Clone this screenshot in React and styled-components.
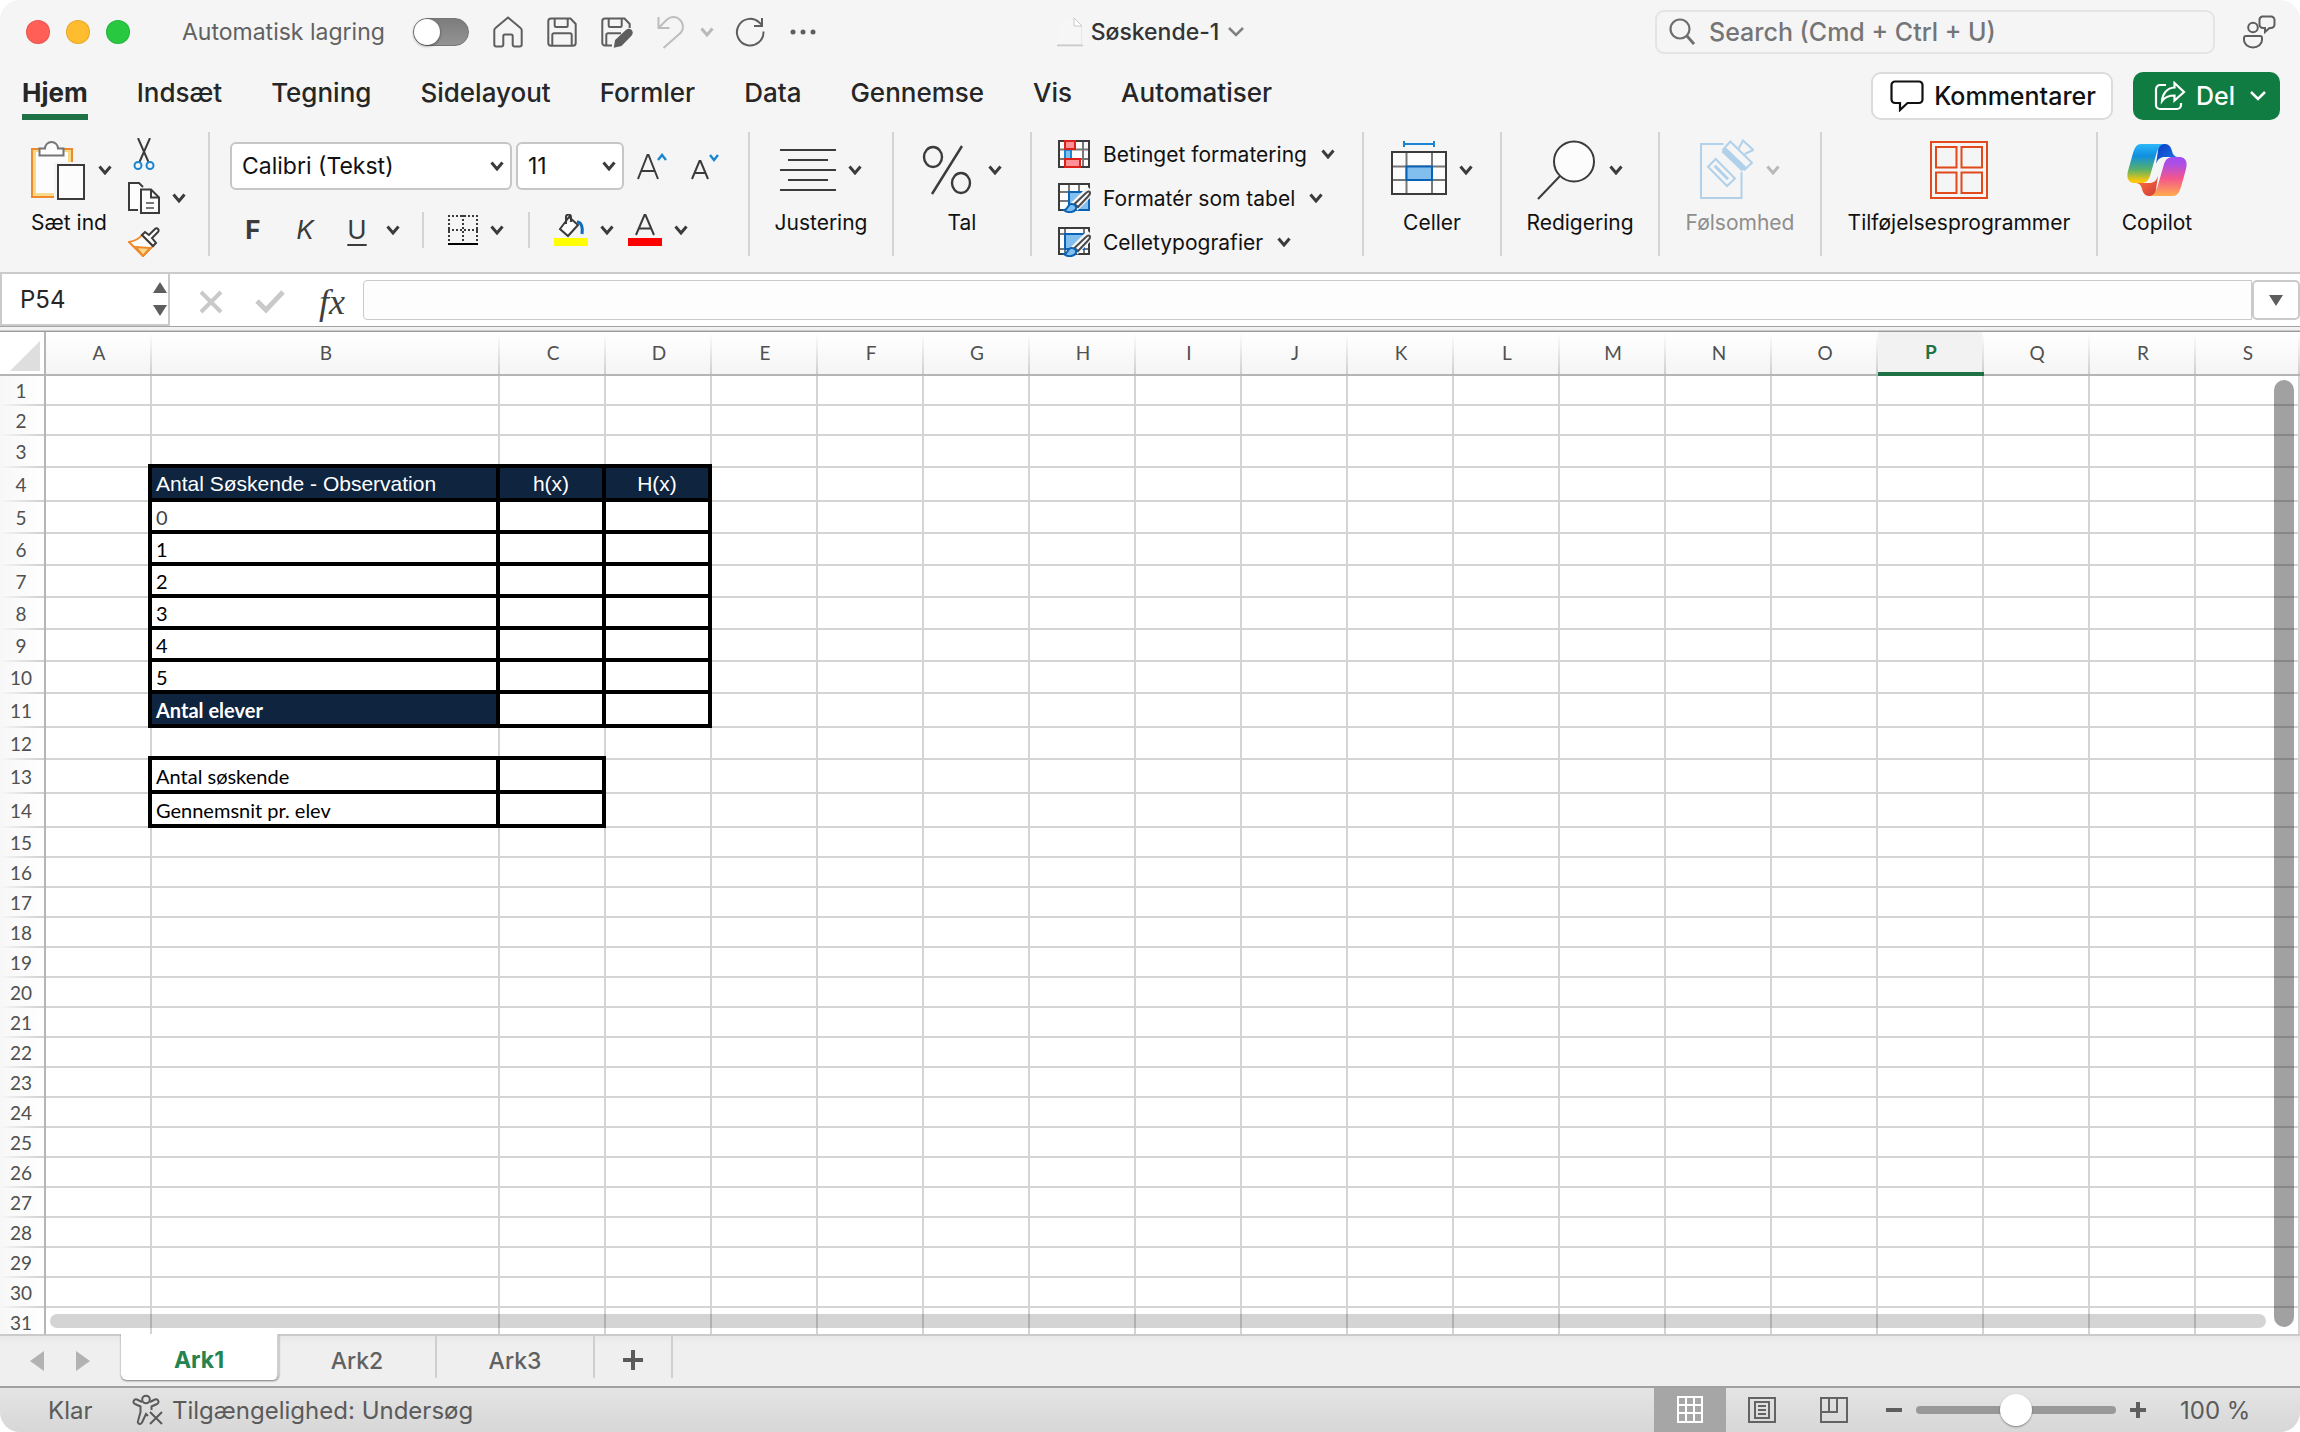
import React, { useState } from "react"
import styled, { createGlobalStyle } from "styled-components"

const TABS = ["Hjem", "Indsæt", "Tegning", "Sidelayout", "Formler", "Data", "Gennemse", "Vis", "Automatiser"]
const COLUMNS = "ABCDEFGHIJKLMNOPQRS".split("")
const ROWS = Array.from({ length: 31 }, (_, i) => i + 1)
const SHEETS = ["Ark1", "Ark2", "Ark3"]

const rowHeight = (row) => {
    if ([4, 11, 13, 14].includes(row)) return 34
    if (row === 3 || (row > 4 && row < 13)) return 32
    return 30
}

const columnWidth = (column) => {
    if (column === "B") return 348
    // the last column takes what is left of the window
    if (column === "S") return undefined
    return 106
}

const CELLS = {
    B4: { text: "Antal Søskende - Observation", kind: "heading" },
    C4: { text: "h(x)", kind: "heading", align: "center" },
    D4: { text: "H(x)", kind: "heading", align: "center" },
    B5: { text: "0", muted: true },
    B6: { text: "1" },
    B7: { text: "2" },
    B8: { text: "3" },
    B9: { text: "4" },
    B10: { text: "5" },
    B11: { text: "Antal elever", kind: "total" },
    B13: { text: "Antal søskende" },
    B14: { text: "Gennemsnit pr. elev" },
}

const isBoxed = (column, row) => {
    if (row >= 4 && row <= 11) return "BCD".includes(column)
    if (row === 13 || row === 14) return "BC".includes(column)
    return false
}

/* ---------- icons ---------- */

const Chevron = ({ color = "#3b3b3b" }) => (
    <Icon width="14" height="10" viewBox="0 0 14 10">
        <path d="M1.5 1.5L7 8l5.500-6.500" stroke={color} strokeWidth="3" />
    </Icon>
)

const WideChevron = ({ color }) => (
    <Icon width="18" height="12" viewBox="0 0 18 12">
        <path d="M2 2l7 7 7-7" stroke={color} strokeWidth="2.5" />
    </Icon>
)

const HomeIcon = () => (
    <Icon width="30" height="32" viewBox="0 0 30 32" stroke="#5e5e5e" strokeWidth="2">
        <path d="M15 1.5L27.5 12a3 3 0 0 1 1.2 2v14.5a2 2 0 0 1-2 2h-5a2 2 0 0 1-2-2V20a1.500 1.500 0 0 0-1.500-1.500h-6.400A1.500 1.500 0 0 0 10.300 20v8.500a2 2 0 0 1-2 2h-5a2 2 0 0 1-2-2V14a3 3 0 0 1 1.200-2z" />
    </Icon>
)

const SaveIcon = () => (
    <Icon width="30" height="30" viewBox="0 0 30 30" stroke="#5e5e5e" strokeWidth="2">
        <path d="M4 1.5h19.5L28.700 7v19a2.700 2.700 0 0 1-2.700 2.700H4A2.700 2.700 0 0 1 1.300 26V4.200A2.700 2.700 0 0 1 4 1.500z" />
        <path d="M7.700 1.500V8.500a1.500 1.500 0 0 0 1.500 1.500h10a1.500 1.500 0 0 0 1.500-1.500V1.500M5.300 28.500V18a1.700 1.700 0 0 1 1.700-1.700h16a1.700 1.700 0 0 1 1.700 1.700v10.500" />
    </Icon>
)

const SaveAsIcon = () => (
    <Icon width="32" height="32" viewBox="0 0 32 32" stroke="#5e5e5e" strokeWidth="2">
        <path d="M11 29.500H4A2.700 2.700 0 0 1 1.300 27V5.200A2.700 2.700 0 0 1 4 2.500h19.500L28.700 8v4" />
        <path d="M7.700 2.500V9.500A1.500 1.500 0 0 0 9.200 11h10a1.500 1.500 0 0 0 1.500-1.500V2.500M5.300 29.500V19A1.700 1.700 0 0 1 7 17.300h13" />
        <path d="M14 30.500l1-6L25.500 14.700a2.800 2.800 0 0 1 4.500 4L20 29z" fill="#5e5e5e" />
    </Icon>
)

const UndoIcon = () => (
    <Icon width="28" height="34" viewBox="0 0 28 34" stroke="#bdbdbd" strokeWidth="2">
        <path d="M1.500 2v11h11M1.500 13L10 4.500a9.600 9.600 0 0 1 14 13L6.500 33" />
    </Icon>
)

const RedoIcon = () => (
    <Icon width="30" height="30" viewBox="0 0 30 30" stroke="#5e5e5e" strokeWidth="2">
        <path d="M28.500 14.500A13.300 13.300 0 1 1 24 5.200L27 8M27 1v8h-8" />
    </Icon>
)

const DotsIcon = () => (
    <Icon width="28" height="8" viewBox="0 0 28 8" fill="#5e5e5e">
        <circle cx="4" cy="4" r="2.5" />
        <circle cx="14" cy="4" r="2.5" />
        <circle cx="24" cy="4" r="2.5" />
    </Icon>
)

const DocIcon = () => (
    <Icon width="26" height="32" viewBox="0 0 26 32">
        <path d="M1 2h16l8 8v19.500H1z" fill="#e6e6e6" />
        <path d="M1 2h16v8h7v18H1z" fill="#f6f6f6" />
        <path d="M17 2l8 8h-8z" fill="#fff" stroke="#c8c8c8" strokeWidth="1" />
        <path d="M0 29.500h26" stroke="#c9c9c9" strokeWidth="1.5" />
    </Icon>
)

const SearchIcon = () => (
    <Icon width="26" height="28" viewBox="0 0 26 28" stroke="#6e6e6e" strokeWidth="2.2">
        <circle cx="11" cy="11" r="9.5" />
        <path d="M18 18l7 8" strokeWidth="2.8" />
    </Icon>
)

const PresenceIcon = () => (
    <Icon width="34" height="34" viewBox="0 0 34 34" stroke="#5e5e5e" strokeWidth="2">
        <circle cx="11" cy="12.5" r="4.8" />
        <path d="M4 21h14a2 2 0 0 1 2 2v2c0 4-4 7.500-9 7.500S2 29 2 25v-2a2 2 0 0 1 2-2z" />
        <path d="M20 1.500h9a3.500 3.500 0 0 1 3.500 3.500v4.500A3.500 3.500 0 0 1 29 13h-1.500L23 17v-4h-2a3.500 3.500 0 0 1-3.500-3.500V5A3.500 3.500 0 0 1 20 1.500z" />
    </Icon>
)

const CommentIcon = () => (
    <Icon width="34" height="32" viewBox="0 0 34 32" stroke="#111" strokeWidth="2.2">
        <path d="M5 1.500h24a3.500 3.500 0 0 1 3.500 3.500v14.500A3.500 3.500 0 0 1 29 23H17.500L10 30v-7H5a3.500 3.500 0 0 1-3.500-3.500V5A3.500 3.500 0 0 1 5 1.500z" />
    </Icon>
)

const ShareIcon = () => (
    <Icon width="32" height="30" viewBox="0 0 32 30" stroke="#fff" strokeWidth="2.2">
        <path d="M12 4H6a4 4 0 0 0-4 4v16a4 4 0 0 0 4 4h17a4 4 0 0 0 4-4v-2" />
        <path d="M20.500 2L30 11l-9.500 8.500V14.500C15 14.500 11 16 8 20c.5-7.500 5-13 12.500-13.500z" />
    </Icon>
)

const PasteIcon = () => (
    <Icon width="60" height="60" viewBox="-4 0 60 60">
        <path d="M2 9h40v48H2z" fill="#f7d98b" stroke="#ee8a2c" strokeWidth="2" />
        <path d="M6 12h32v41H6z" fill="#fcfcfc" />
        <path d="M24 22h22v38H24z" fill="#f5f5f5" />
        <path d="M9.500 15.500V8.500H15a6.500 6.500 0 0 1 13 0h5.500v7z" fill="#fcfcfc" stroke="#757575" strokeWidth="2" />
        <path d="M28 25h26v34H28z" fill="#fcfcfc" stroke="#3b3b3b" strokeWidth="2" />
    </Icon>
)

const CutIcon = () => (
    <Icon width="22" height="32" viewBox="0 0 22 32">
        <path d="M5 0L15.500 24M17 0L6.500 24" stroke="#3b3b3b" strokeWidth="2" />
        <circle cx="5" cy="27.5" r="3.5" stroke="#1a86d0" strokeWidth="2" />
        <circle cx="17" cy="27.5" r="3.5" stroke="#1a86d0" strokeWidth="2" />
    </Icon>
)

const CopyIcon = () => (
    <Icon width="32" height="32" viewBox="0 0 32 32" stroke="#3b3b3b" strokeWidth="2">
        <path d="M10 28H1V1h10l4 4" fill="#fcfcfc" />
        <path d="M13 7.500h10l8 8V31H13z" fill="#fcfcfc" />
        <path d="M23 7.500v8h8" />
        <path d="M18 21h8M18 26h8" stroke="#777" />
    </Icon>
)

const BrushIcon = () => (
    <Icon width="32" height="30" viewBox="0 0 32 30" strokeWidth="2">
        <path d="M14 8L25 19 15 29 1 15C7 14 11 12 14 8z" fill="#fcfcfc" stroke="#ee8a2c" />
        <path d="M8 20l14 1-7 8z" fill="#f7d98b" stroke="#ee8a2c" />
        <path d="M14 8l3-3 4 3 6-6c2-2 5 1 3 3l-6 6 4 5-3 3z" fill="#fcfcfc" stroke="#3b3b3b" />
    </Icon>
)

const GrowFontIcon = () => (
    <Icon width="32" height="28" viewBox="0 0 32 28">
        <path d="M2 27L11.500 3h1L22 27M5.500 19h13" stroke="#3b3b3b" strokeWidth="2" />
        <path d="M22 8l4-5 4 5" stroke="#1a86d0" strokeWidth="2.4" />
    </Icon>
)

const ShrinkFontIcon = () => (
    <Icon width="32" height="28" viewBox="0 0 32 28">
        <path d="M2 27L9.500 9h1L18 27M5 21h10" stroke="#3b3b3b" strokeWidth="2" />
        <path d="M20 3l4 5 4-5" stroke="#1a86d0" strokeWidth="2.4" />
    </Icon>
)

const BordersIcon = () => (
    <Icon width="30" height="30" viewBox="0 0 30 30" stroke="#3b3b3b" strokeWidth="2">
        <path d="M0 1h30M0 15h30" strokeDasharray="2 2" />
        <path d="M1 0v28M15 0v28M29 0v28" strokeDasharray="2 2" />
        <path d="M0 29h30" stroke="#000" />
    </Icon>
)

const FillIcon = () => (
    <Icon width="34" height="32" viewBox="0 0 34 32">
        <path d="M15 3L6 15l8 7 10-11-9-8zM12 10V3a2.500 2.500 0 0 1 5 0v5" fill="#fcfcfc" stroke="#3b3b3b" strokeWidth="2" />
        <path d="M23 8c4 0 6 4 5 12" stroke="#0f6cbd" strokeWidth="3" />
        <path d="M0 24h34v8H0z" fill="#ff0" />
    </Icon>
)

const FontColorIcon = () => (
    <Icon width="34" height="32" viewBox="0 0 34 32">
        <path d="M8 21L16.500 1h1L26 21M11 14.500h12" stroke="#3b3b3b" strokeWidth="2" />
        <path d="M0 24h34v8H0z" fill="#f00" />
    </Icon>
)

const AlignIcon = () => (
    <Icon width="56" height="44" viewBox="0 0 56 44" stroke="#3b3b3b" strokeWidth="2">
        <path d="M0 2h56M8 12h40M0 22h56M8 32h40M0 42h56" />
    </Icon>
)

const PercentIcon = () => (
    <Icon width="54" height="50" viewBox="0 0 54 50" stroke="#3b3b3b" strokeWidth="2.4">
        <ellipse cx="11" cy="12" rx="9" ry="10" />
        <ellipse cx="39" cy="38" rx="9" ry="10" />
        <path d="M40 1L10 49" />
    </Icon>
)

const ConditionalIcon = () => (
    <Icon width="34" height="28" viewBox="0 0 34 28" strokeWidth="2">
        <path d="M1 1h30v26H1z" fill="#fcfcfc" />
        <path d="M1 9.500h30M1 19h30M25 1v26" stroke="#777" />
        <path d="M1 1h30v26H1z" stroke="#3b3b3b" />
        <path d="M7 10h6v9H7z" fill="#83bfee" stroke="#1a86d0" />
        <path d="M7 1h10v8H7zM7 19h15v8H7z" fill="#ff9095" stroke="#dd2018" />
    </Icon>
)

const Paintbrush = () => (
    <>
        <path d="M33 7L16 24" stroke="#f5f5f5" strokeWidth="10" />
        <path d="M31 8.500c2 1 1 3-1 5L20 24l-3.500-3L28 10c1-1 2-2 3-1.500z" fill="#fcfcfc" stroke="#4b4b4b" strokeWidth="2" />
        <path d="M6 27c4 0 3-5 7-6 3-.5 6 2 5 5-2 4-9 4-12 1z" fill="#83bfee" stroke="#0a62b5" strokeWidth="2" />
    </>
)

const TableStyleIcon = () => (
    <Icon width="34" height="30" viewBox="0 0 34 30" strokeWidth="2">
        <path d="M1 1h30v26H1z" fill="#fcfcfc" />
        <path d="M1 9h30M1 18h30M11 1v26M21 1v26" stroke="#777" />
        <path d="M1 1h30v26H1z" stroke="#3b3b3b" />
        <path d="M11 9h20v18H11z" fill="#83bfee" stroke="#0a62b5" />
        <Paintbrush />
    </Icon>
)

const CellStyleIcon = () => (
    <Icon width="34" height="30" viewBox="0 0 34 30" strokeWidth="2">
        <path d="M1 1h30v26H1z" fill="#fcfcfc" />
        <path d="M1 7h30M1 22h30M7 1v26M26 1v26" stroke="#777" />
        <path d="M1 1h30v26H1z" stroke="#3b3b3b" />
        <path d="M7 7h19v15H7z" fill="#83bfee" stroke="#0a62b5" />
        <Paintbrush />
    </Icon>
)

const CellsIcon = () => (
    <Icon width="56" height="58" viewBox="0 0 56 58" strokeWidth="2">
        <path d="M13 0v6M43 0v6M13 3h30" stroke="#1a86d0" />
        <path d="M1 11h54v42H1z" fill="#fcfcfc" />
        <path d="M15.500 11v42M41 11v42M1 25.500h54M1 39h54" stroke="#777" />
        <path d="M1 11h54v42H1z" stroke="#3b3b3b" />
        <path d="M15.500 25.500H41V39H15.500z" fill="#83bfee" stroke="#0a62b5" />
    </Icon>
)

const MagnifierIcon = () => (
    <Icon width="60" height="60" viewBox="0 0 60 60" stroke="#3b3b3b" strokeWidth="2">
        <circle cx="37" cy="21.5" r="20" fill="#fcfcfc" />
        <path d="M23 36L1 59" />
    </Icon>
)

const SensitivityIcon = () => (
    <Icon width="54" height="62" viewBox="0 0 54 62" stroke="#b1d1ea" strokeWidth="2">
        <path d="M23.500 5H1v54h40.500V33" />
        <path d="M15.700 20L35 39.500 27 47 8 27.700z" />
        <path d="M14.700 26.700L28 40.300" strokeWidth="3" />
        <path d="M30.300 2.500L52 23.700l-7.300 7L23 10.700z" />
        <path d="M23 13l19 18 3-3-19-18z" fill="#b1d1ea" />
        <path d="M38.700 9.500L43 1.500l10.300 9.500-8.500 4" />
    </Icon>
)

const AddInsIcon = () => (
    <Icon width="58" height="58" viewBox="0 0 58 58" stroke="#e2491b" strokeWidth="2">
        <path d="M1 1h56v56H1zM6 6h20.500v20.500H6zM31.500 6H52v20.500H31.500zM6 31.500h20.500V52H6zM31.500 31.500H52V52H31.500z" />
    </Icon>
)

const CopilotIcon = () => (
    <Icon width="60" height="53" viewBox="0 0 60 53">
        <defs>
            <linearGradient id="cpLeft" x1="0" y1="0" x2="0" y2="1">
                <stop offset="0" stopColor="#2bb8f8" />
                <stop offset="0.3" stopColor="#0f8fe2" />
                <stop offset="0.65" stopColor="#57b06a" />
                <stop offset="0.95" stopColor="#fcc80a" />
            </linearGradient>
            <linearGradient id="cpRight" x1="0" y1="1" x2="0" y2="0">
                <stop offset="0" stopColor="#a04cf4" />
                <stop offset="0.2" stopColor="#b04fe0" />
                <stop offset="0.55" stopColor="#f4568c" />
                <stop offset="1" stopColor="#ffac4c" />
            </linearGradient>
            <linearGradient id="cpTop" x1="0" y1="0" x2="1" y2="1">
                <stop offset="0" stopColor="#0a37c4" />
                <stop offset="1" stopColor="#1c83ea" />
            </linearGradient>
            <linearGradient id="cpBottom" x1="1" y1="1" x2="0" y2="0">
                <stop offset="0" stopColor="#ff7a3c" />
                <stop offset="1" stopColor="#d23a3a" />
            </linearGradient>
        </defs>
        <path d="M32 0h6c4 0 6 3 7 7 1 4 3 6 7 6H38c-5 0-7 2-9 7z" fill="url(#cpTop)" />
        <path d="M14 0h23c-4 1-6 4-8 11l-6 21c-2 5-4 7-9 7H8c-6 0-9-4-7-12L6 9c2-6 4-9 8-9z" fill="url(#cpLeft)" />
        <g transform="rotate(180 30 26)">
            <path d="M32 0h6c4 0 6 3 7 7 1 4 3 6 7 6H38c-5 0-7 2-9 7z" fill="url(#cpBottom)" />
            <path d="M14 0h23c-4 1-6 4-8 11l-6 21c-2 5-4 7-9 7H8c-6 0-9-4-7-12L6 9c2-6 4-9 8-9z" fill="url(#cpRight)" />
        </g>
    </Icon>
)

const TriangleIcon = ({ points, width = 14, height = 11, color = "#5e5e5e" }) => (
    <Icon width={width} height={height} viewBox={`0 0 ${width} ${height}`}>
        <polygon points={points} fill={color} />
    </Icon>
)

const AccessibilityIcon = () => (
    <Icon width="32" height="32" viewBox="0 0 32 32" stroke="#5a5a5a" strokeWidth="2">
        <circle cx="14" cy="5.5" r="3.8" />
        <path d="M10 8L5 5.500C2 4.500 0 8.500 3 10l5.500 2.500V18L6 27c-1 3 3 4 4 1.500L14 20l2 2M18 8l5-2.500c3-1 5 3 2 4.500l-5.500 2.500V16" />
        <path d="M18 18l12 12M30 18L18 30" />
    </Icon>
)

const NormalViewIcon = () => (
    <Icon width="26" height="28" viewBox="0 0 26 28" stroke="#fff" strokeWidth="2">
        <path d="M1 1h24v25H1zM1 9h24M1 17h24M9 1v25M17 1v25" />
    </Icon>
)

const PageLayoutIcon = () => (
    <Icon width="28" height="28" viewBox="0 0 28 28" stroke="#636363" strokeWidth="2">
        <path d="M1 2h26v24H1zM7 6h14v16H7zM10 10h8M10 14h8M10 18h8" />
    </Icon>
)

const PageBreakIcon = () => (
    <Icon width="28" height="28" viewBox="0 0 28 28" stroke="#636363" strokeWidth="2">
        <path d="M1 2h26v24H1zM1 16h16V2M9 2v14" />
    </Icon>
)

/* ---------- parts ---------- */

const BigTool = ({ icon, label, chevron = true, disabled }) => (
    <ToolButton disabled={disabled}>
        <ToolFace>
            {icon}
            {chevron && <Chevron color={disabled ? "#b9b9b9" : undefined} />}
        </ToolFace>
        {label}
    </ToolButton>
)

function TitleBar() {
    const [autosave, setAutosave] = useState(false)

    return (
        <TitleRow>
            <TitleTools>
                <Light $color="#ff5f57" aria-label="Luk" />
                <Light $color="#febc2e" aria-label="Minimer" />
                <Light $color="#28c840" aria-label="Zoom" />
                <AutosaveLabel>
                    Automatisk lagring
                    <Toggle type="checkbox" checked={autosave} onChange={() => setAutosave(!autosave)} />
                </AutosaveLabel>
                <QuickAccess>
                    <PlainButton aria-label="Startside"><HomeIcon /></PlainButton>
                    <PlainButton aria-label="Gem"><SaveIcon /></PlainButton>
                    <PlainButton aria-label="Gem som"><SaveAsIcon /></PlainButton>
                    <UndoTools>
                        <PlainButton aria-label="Fortryd"><UndoIcon /></PlainButton>
                        <PlainButton aria-label="Fortryd liste"><Chevron color="#b9b9b9" /></PlainButton>
                    </UndoTools>
                    <PlainButton aria-label="Gentag"><RedoIcon /></PlainButton>
                    <PlainButton aria-label="Mere"><DotsIcon /></PlainButton>
                </QuickAccess>
            </TitleTools>
            <DocumentTitle>
                <DocIcon />
                Søskende-1
                <WideChevron color="#808080" />
            </DocumentTitle>
            <TitleEnd>
                <SearchBox>
                    <SearchIcon />
                    <input aria-label="Search" placeholder="Search (Cmd + Ctrl + U)" />
                </SearchBox>
                <PlainButton aria-label="Samarbejde"><PresenceIcon /></PlainButton>
            </TitleEnd>
        </TitleRow>
    )
}

function Ribbon() {
    return (
        <RibbonRow>
            <ClipboardGroup>
                <BigTool icon={<PasteIcon />} label="Sæt ind" />
                <SmallTools>
                    <PlainButton aria-label="Klip"><CutIcon /></PlainButton>
                    <span />
                    <PlainButton aria-label="Kopiér"><CopyIcon /></PlainButton>
                    <Chevron />
                    <PlainButton aria-label="Formatpensel"><BrushIcon /></PlainButton>
                </SmallTools>
            </ClipboardGroup>

            <FontGroup>
                <PickerLine>
                    <Picker $width={282}>
                        <select aria-label="Skrifttype">
                            <option>Calibri (Tekst)</option>
                        </select>
                        <Chevron />
                    </Picker>
                    <Picker $width={108}>
                        <select aria-label="Skriftstørrelse">
                            <option>11</option>
                        </select>
                        <Chevron />
                    </Picker>
                    <FontSizers>
                        <PlainButton aria-label="Forøg skriftstørrelse"><GrowFontIcon /></PlainButton>
                        <PlainButton aria-label="Formindsk skriftstørrelse"><ShrinkFontIcon /></PlainButton>
                    </FontSizers>
                </PickerLine>
                <FontLine>
                    <StyleButton $look="bold">F</StyleButton>
                    <StyleButton $look="italic">K</StyleButton>
                    <StyleButton $look="underline">U</StyleButton>
                    <Chevron />
                    <Divider />
                    <SplitTool aria-label="Kanter"><BordersIcon /><Chevron /></SplitTool>
                    <Divider />
                    <SplitTool aria-label="Fyldfarve"><FillIcon /><Chevron /></SplitTool>
                    <SplitTool aria-label="Skriftfarve"><FontColorIcon /><Chevron /></SplitTool>
                </FontLine>
            </FontGroup>

            <Group $width={144}><BigTool icon={<AlignIcon />} label="Justering" /></Group>
            <Group $width={138}><BigTool icon={<PercentIcon />} label="Tal" /></Group>

            <StylesGroup>
                <WideTool><ConditionalIcon />Betinget formatering<Chevron /></WideTool>
                <WideTool><TableStyleIcon />Formatér som tabel<Chevron /></WideTool>
                <WideTool><CellStyleIcon />Celletypografier<Chevron /></WideTool>
            </StylesGroup>

            <Group $width={138}><BigTool icon={<CellsIcon />} label="Celler" /></Group>
            <Group $width={158}><BigTool icon={<MagnifierIcon />} label="Redigering" /></Group>
            <Group $width={162}><BigTool icon={<SensitivityIcon />} label="Følsomhed" disabled /></Group>
            <Group $width={276}><BigTool icon={<AddInsIcon />} label="Tilføjelsesprogrammer" chevron={false} /></Group>
            <Group $width={118} $last><BigTool icon={<CopilotIcon />} label="Copilot" chevron={false} /></Group>
        </RibbonRow>
    )
}

function Sheet({ active }) {
    return (
        <SheetArea>
            <Grid>
                <colgroup>
                    <col width="46" />
                    {COLUMNS.map((column) => (
                        <col key={column} width={columnWidth(column)} />
                    ))}
                </colgroup>
                <thead>
                    <tr>
                        <Corner><TriangleIcon width={30} height={30} points="30,0 30,30 0,30" color="#dedede" /></Corner>
                        {COLUMNS.map((column) => (
                            <ColumnHead key={column} scope="col" $active={column === active}>{column}</ColumnHead>
                        ))}
                    </tr>
                </thead>
                <tbody>
                    {ROWS.map((row) => (
                        <tr key={row}>
                            <RowHead scope="row" $height={rowHeight(row)}>{row}</RowHead>
                            {COLUMNS.map((column) => {
                                const cell = CELLS[column + row] || {}
                                const CellType = isBoxed(column, row) ? BoxedCell : Cell
                                return (
                                    <CellType key={column} $kind={cell.kind} $align={cell.align} $muted={cell.muted}>
                                        {cell.text}
                                    </CellType>
                                )
                            })}
                        </tr>
                    ))}
                </tbody>
            </Grid>
            <HorizontalThumb />
            <VerticalThumb />
        </SheetArea>
    )
}

export default function App() {
    const [tab, setTab] = useState("Hjem")
    const [sheet, setSheet] = useState("Ark1")
    const [zoom, setZoom] = useState(50)

    return (
        <Window>
            <GlobalStyle />
            <TitleBar />

            <TabRow>
                <TabList>
                    {TABS.map((name) => (
                        <Tab key={name} $active={name === tab} onClick={() => setTab(name)}>{name}</Tab>
                    ))}
                </TabList>
                <CommentButton><CommentIcon />Kommentarer</CommentButton>
                <ShareButton><ShareIcon />Del<WideChevron color="#fff" /></ShareButton>
            </TabRow>

            <Ribbon />

            <FormulaBar>
                <NameBox>
                    <input aria-label="Navneboks" defaultValue="P54" />
                    <Spinner>
                        <TriangleIcon points="7,0 14,11 0,11" />
                        <TriangleIcon points="0,0 14,0 7,11" />
                    </Spinner>
                </NameBox>
                <FormulaTools>
                    <PlainButton aria-label="Annuller">
                        <Icon width="24" height="24" viewBox="0 0 24 24" stroke="#c9c9c9" strokeWidth="4">
                            <path d="M2 2l20 20M22 2L2 22" />
                        </Icon>
                    </PlainButton>
                    <PlainButton aria-label="Accepter">
                        <Icon width="30" height="24" viewBox="0 0 30 24" stroke="#c9c9c9" strokeWidth="5">
                            <path d="M2 11l9 9L28 2" />
                        </Icon>
                    </PlainButton>
                    <FunctionButton>fx</FunctionButton>
                </FormulaTools>
                <FormulaInput aria-label="Formellinje" />
                <ExpandButton aria-label="Udvid formellinje">
                    <TriangleIcon points="0,0 14,0 7,11" />
                </ExpandButton>
            </FormulaBar>
            <Splitter />

            <Sheet active="P" />

            <SheetTabs>
                <SheetArrows>
                    <TriangleIcon width={14} height={20} points="14,0 14,20 0,10" color="#b2b2b2" />
                    <TriangleIcon width={14} height={20} points="0,0 14,10 0,20" color="#b2b2b2" />
                </SheetArrows>
                {SHEETS.map((name) => (
                    <SheetTab key={name} $active={name === sheet} onClick={() => setSheet(name)}>{name}</SheetTab>
                ))}
                <AddSheet aria-label="Nyt ark">
                    <Icon width="20" height="20" viewBox="0 0 20 20" stroke="#5a5a5a" strokeWidth="4">
                        <path d="M10 0v20M0 10h20" />
                    </Icon>
                </AddSheet>
            </SheetTabs>

            <StatusBar>
                <StatusText>Klar</StatusText>
                <StatusCheck><AccessibilityIcon />Tilgængelighed: Undersøg</StatusCheck>
                <ViewButton aria-label="Normal" $active><NormalViewIcon /></ViewButton>
                <ViewButton aria-label="Sidelayout"><PageLayoutIcon /></ViewButton>
                <ViewButton aria-label="Sideskift"><PageBreakIcon /></ViewButton>
                <ZoomControls>
                    <PlainButton aria-label="Zoom ud">
                        <Icon width="16" height="16" viewBox="0 0 16 16" stroke="#5e5e5e" strokeWidth="4">
                            <path d="M0 8h16" />
                        </Icon>
                    </PlainButton>
                    <ZoomSlider type="range" aria-label="Zoom" value={zoom} onChange={(e) => setZoom(e.target.value)} />
                    <PlainButton aria-label="Zoom ind">
                        <Icon width="16" height="16" viewBox="0 0 16 16" stroke="#5e5e5e" strokeWidth="4">
                            <path d="M0 8h16M8 0v16" />
                        </Icon>
                    </PlainButton>
                </ZoomControls>
                <ZoomValue>100 %</ZoomValue>
            </StatusBar>
        </Window>
    )
}

/* ---------- styles ---------- */

const GlobalStyle = createGlobalStyle`
    * {
        box-sizing: border-box;
    }
    body {
        margin: 0;
        background: #fff;
        font-family: Inter, "Liberation Sans", sans-serif;
        color: #262626;
    }
    button, input, select {
        font: inherit;
        color: inherit;
    }
    button {
        border: 0;
        padding: 0;
        background: none;
    }
`

const Icon = styled.svg.attrs((props) => ({ fill: props.fill || "none" }))`
    display: block;
    flex: none;
`

const Window = styled.div`
    display: flex;
    flex-direction: column;
    height: 100vh;
    border-radius: 20px;
    overflow: hidden;
    background: #f5f5f5;
`

const PlainButton = styled.button`
    display: flex;
    align-items: center;
    justify-content: center;
`

// title bar
const TitleRow = styled.header`
    display: grid;
    grid-template-columns: 1fr auto 1fr;
    align-items: center;
    height: 64px;
    padding: 0 24px 0 26px;
`

const TitleTools = styled.div`
    display: flex;
    align-items: center;
    gap: 16px;
`

const Light = styled.button`
    width: 24px;
    height: 24px;
    border-radius: 50%;
    background: ${({ $color }) => $color};
    box-shadow: inset 0 0 0 1px rgba(0, 0, 0, 0.1);
`

const AutosaveLabel = styled.label`
    display: flex;
    align-items: center;
    gap: 28px;
    margin-left: 36px;
    font-size: 23px;
    white-space: nowrap;
    color: #616161;
`

const Toggle = styled.input`
    appearance: none;
    display: flex;
    width: 56px;
    height: 28px;
    margin: 0;
    border-radius: 14px;
    background: linear-gradient(#7c7c7c, #949494);
    border: 1px solid #767676;

    &::before {
        content: "";
        width: 26px;
        height: 26px;
        border-radius: 50%;
        background: #fff;
        box-shadow: 0 1px 3px rgba(0, 0, 0, 0.5);
    }
    &:checked {
        justify-content: flex-end;
    }
`

const QuickAccess = styled.div`
    display: flex;
    align-items: center;
    gap: 24px;
    margin-left: 8px;
`

const UndoTools = styled.div`
    display: flex;
    align-items: center;
    gap: 15px;
    margin-right: -3px;
`

const DocumentTitle = styled.div`
    display: flex;
    align-items: center;
    gap: 8px;
    font-size: 23px;
    font-weight: 500;
    color: #333;
`

const TitleEnd = styled.div`
    display: flex;
    align-items: center;
    justify-content: flex-end;
    gap: 27px;
`

const SearchBox = styled.label`
    display: flex;
    align-items: center;
    gap: 14px;
    width: 560px;
    height: 44px;
    padding: 0 12px;
    border: 2px solid #e4e4e4;
    border-radius: 9px;

    input {
        flex: 1;
        min-width: 0;
        border: 0;
        padding: 0;
        background: none;
        outline: none;
        font-size: 25px;
        font-weight: 500;
    }
    input::placeholder {
        color: #757575;
    }
`

// ribbon tabs
const TabRow = styled.nav`
    display: flex;
    align-items: center;
    height: 64px;
    padding-right: 20px;
`

const TabList = styled.div`
    display: flex;
    flex: 1;
    align-self: flex-start;
    gap: 49px;
    padding-left: 22px;
`

const Tab = styled.button`
    height: 56px;
    padding: 8px 0 0;
    font-size: 26px;
    font-weight: ${({ $active }) => ($active ? 700 : 500)};
    line-height: 42px;
    border-bottom: 6px solid ${({ $active }) => ($active ? "#1f7246" : "transparent")};
`

const CommentButton = styled.button`
    display: flex;
    align-items: center;
    gap: 10px;
    height: 48px;
    padding: 0 15px 0 17px;
    border: 2px solid #dcdcdc;
    border-radius: 10px;
    background: #fff;
    color: #111;
    font-size: 25px;
    font-weight: 500;
`

const ShareButton = styled.button`
    display: flex;
    align-items: center;
    gap: 10px;
    height: 48px;
    margin-left: 20px;
    padding: 0 13px 0 21px;
    border-radius: 10px;
    background: #107c41;
    color: #fff;
    font-size: 25px;
    font-weight: 500;

    svg:last-child {
        margin-left: 4px;
    }
`

// ribbon
const RibbonRow = styled.div`
    display: flex;
    padding: 4px 0 16px;
    border-bottom: 2px solid #cacaca;
`

const Group = styled.section`
    display: flex;
    flex: none;
    align-items: flex-start;
    justify-content: center;
    width: ${({ $width }) => $width}px;
    height: 124px;
    border-right: ${({ $last }) => ($last ? "0" : "2px solid #d4d4d4")};
`

const ClipboardGroup = styled(Group)`
    justify-content: flex-start;
    gap: 16px;
    width: 210px;
    padding-left: 26px;
`

const FontGroup = styled(Group)`
    flex-direction: column;
    justify-content: flex-start;
    width: 540px;
    gap: 16px;
    padding: 10px 0 0 20px;
`

const StylesGroup = styled(Group)`
    flex-direction: column;
    justify-content: flex-start;
    width: 332px;
    padding-left: 26px;
`

const ToolButton = styled.button`
    display: flex;
    flex-direction: column;
    align-items: center;
    font-size: 21px;
    line-height: 26px;
    color: ${({ disabled }) => (disabled ? "#8e8e8e" : "#111")};
`

const ToolFace = styled.span`
    display: flex;
    align-items: center;
    gap: 12px;
    height: 78px;
    padding-bottom: 2px;
`

const SmallTools = styled.div`
    display: grid;
    grid-template-columns: 32px 14px;
    grid-template-rows: 44px 44px 44px;
    column-gap: 12px;
    align-items: center;
    justify-items: center;
`

const FontLine = styled.div`
    display: flex;
    align-items: center;
    gap: 6px;
    height: 48px;
`

const PickerLine = styled(FontLine)`
    gap: 4px;
`

const Picker = styled.label`
    position: relative;
    display: flex;
    align-items: center;
    width: ${({ $width }) => $width}px;
    height: 48px;
    border: 2px solid #c6c6c6;
    border-radius: 6px;
    background: #fff;

    select {
        appearance: none;
        width: 100%;
        height: 100%;
        padding: 0 10px;
        border: 0;
        background: none;
        font-size: 23px;
        color: #111;
    }
    svg {
        position: absolute;
        right: 6px;
        pointer-events: none;
    }
`

const FontSizers = styled.div`
    display: flex;
    gap: 22px;
    margin-left: 8px;
`

const StyleButton = styled.button`
    width: 46px;
    font-size: 26px;
    line-height: 32px;
    color: #3b3b3b;
    font-weight: ${({ $look }) => ($look === "bold" ? 700 : 400)};
    font-style: ${({ $look }) => ($look === "italic" ? "italic" : "normal")};
    text-decoration: ${({ $look }) => ($look === "underline" ? "underline" : "none")};
    text-decoration-thickness: 2px;
    text-underline-offset: 5px;
`

const Divider = styled.span`
    width: 2px;
    height: 36px;
    margin: 0 18px 0 16px;
    background: #d4d4d4;
`

const SplitTool = styled.button`
    display: flex;
    align-items: center;
    gap: 12px;
    margin-right: 2px;

    & + & {
        margin-left: 6px;
    }
`

const WideTool = styled.button`
    display: flex;
    flex: none;
    align-items: center;
    gap: 11px;
    height: 44px;
    font-size: 21px;
    color: #111;

    svg:last-child {
        margin-left: 3px;
    }
`

// formula bar
const FormulaBar = styled.div`
    display: flex;
    align-items: center;
    height: 52px;
    background: #fff;
`

const NameBox = styled.div`
    display: flex;
    align-items: center;
    width: 170px;
    height: 52px;
    border: 2px solid #cacaca;
    border-top: 0;

    input {
        flex: 1;
        min-width: 0;
        padding: 0 18px;
        border: 0;
        outline: none;
        font-size: 24px;
    }
`

const Spinner = styled.span`
    display: grid;
    gap: 12px;
    padding-right: 1px;
`

const FormulaTools = styled.div`
    display: flex;
    align-items: center;
    gap: 32px;
    padding: 4px 16px 0 29px;
`

const FunctionButton = styled.button`
    width: 30px;
    font-family: "Liberation Serif", serif;
    font-style: italic;
    font-size: 36px;
    line-height: 36px;
    color: #3f3f3f;
`

const FormulaInput = styled.input`
    flex: 1;
    min-width: 0;
    height: 40px;
    border: 1px solid #cacaca;
    border-radius: 4px 0 0 4px;
    background: #fdfdfd;
    outline: none;
`

const ExpandButton = styled.button`
    display: flex;
    align-items: center;
    justify-content: center;
    width: 48px;
    height: 40px;
    border: 2px solid #cacaca;
    border-radius: 5px;
`

const Splitter = styled.div`
    height: 6px;
    background: linear-gradient(#a4a4a4 1px, #f2f2f2 1px 4px, #cacaca 4px 5px, #9c9c9c 5px);
`

// sheet
const SheetArea = styled.main`
    position: relative;
    flex: 1;
    min-height: 0;
    overflow: hidden;
    background: #fff;
`

const Grid = styled.table`
    width: 100%;
    table-layout: fixed;
    border-collapse: separate;
    border-spacing: 0;
    font-family: Lato, "Open Sans", sans-serif;
    font-size: 20px;
    line-height: 24px;
`

const Corner = styled.td`
    height: 44px;
    padding: 6px 0 0 10px;
    border-right: 2px solid #b5b5b5;
    border-bottom: 2px solid #b5b5b5;
`

const ColumnHead = styled.th`
    height: 44px;
    padding: 0;
    font-size: 19px;
    font-weight: ${({ $active }) => ($active ? 700 : 400)};
    color: ${({ $active }) => ($active ? "#1f7246" : "#505050")};
    border-bottom: ${({ $active }) => ($active ? "4px solid #1f7246" : "2px solid #b5b5b5")};
    background:
        linear-gradient(#fff, #cfcfcf) right / 2px 100% no-repeat,
        ${({ $active }) => ($active ? "linear-gradient(#f2f2f2, #f2f2f2)" : "linear-gradient(#fff, #f5f5f5)")};
`

const RowHead = styled.th`
    height: ${({ $height }) => $height}px;
    padding: 0 2px 0 0;
    font-size: 19px;
    font-weight: 400;
    color: #505050;
    border-right: 2px solid #b5b5b5;
    background:
        linear-gradient(90deg, #f7f7f7, #cfcfcf) bottom / 100% 2px no-repeat,
        linear-gradient(90deg, #f7f7f7, #fff);
`

const Cell = styled.td`
    padding: 0;
    border-right: 2px solid #d4d4d4;
    border-bottom: 2px solid #d4d4d4;
`

// thick frame: right and bottom are borders, left and top are drawn over the neighbours
const BoxedCell = styled.td`
    padding: 2px 4px 0;
    overflow: hidden;
    white-space: nowrap;
    border-right: 4px solid #000;
    border-bottom: 4px solid #000;
    box-shadow: -4px -4px 0 #000, -4px 0 0 #000, 0 -4px 0 #000;
    text-align: ${({ $align }) => $align || "left"};
    font-family: ${({ $kind }) => ($kind === "heading" ? '"Liberation Sans", sans-serif' : "inherit")};
    font-size: ${({ $kind }) => ($kind === "heading" ? 21 : 20)}px;
    font-weight: ${({ $kind }) => ($kind === "total" ? 700 : 400)};
    background: ${({ $kind }) => ($kind ? "#0e243f" : "#fff")};
    color: ${({ $kind, $muted }) => ($kind ? "#fff" : $muted ? "#444" : "#000")};
`

const HorizontalThumb = styled.div`
    position: absolute;
    left: 50px;
    right: 34px;
    bottom: 6px;
    height: 14px;
    border-radius: 7px;
    background: rgba(0, 0, 0, 0.17);
`

const VerticalThumb = styled.div`
    position: absolute;
    top: 48px;
    right: 6px;
    bottom: 7px;
    width: 20px;
    border-radius: 10px;
    background: rgba(0, 0, 0, 0.37);
`

// sheet tabs
const SheetTabs = styled.div`
    display: flex;
    align-items: flex-start;
    height: 54px;
    border-top: 2px solid #cacaca;
    border-bottom: 2px solid #a0a0a0;
    background: linear-gradient(#e8e8e8, #efefef 8px);
`

const SheetArrows = styled.div`
    display: flex;
    gap: 32px;
    width: 121px;
    padding: 15px 0 0 30px;
`

const SheetTab = styled.button`
    width: 158px;
    height: ${({ $active }) => ($active ? 46 : 42)}px;
    margin-top: ${({ $active }) => ($active ? "-2px" : "0")};
    padding-top: ${({ $active }) => ($active ? "6px" : "7px")};
    line-height: 34px;
    font-size: 23px;
    font-weight: ${({ $active }) => ($active ? 700 : 500)};
    color: ${({ $active }) => ($active ? "#25834f" : "#616161")};
    background: ${({ $active }) => ($active ? "#fff" : "none")};
    border-right: 2px solid #cfcfcf;
    border-radius: ${({ $active }) => ($active ? "0 0 6px 6px" : "0")};
    box-shadow: ${({ $active }) => ($active ? "0 1px 2px rgba(0, 0, 0, 0.5)" : "none")};
`

const AddSheet = styled.button`
    display: flex;
    align-items: center;
    justify-content: center;
    width: 78px;
    height: 42px;
    padding-top: 5px;
    border-right: 2px solid #cfcfcf;
`

// status bar
const StatusBar = styled.footer`
    display: flex;
    align-items: center;
    height: 44px;
    padding: 0 48px;
    background: linear-gradient(#e4e4e4, #d7d7d7);
    font-size: 24px;
    color: #5a5a5a;
`

const StatusText = styled.span`
    width: 84px;
`

const StatusCheck = styled.button`
    display: flex;
    align-items: center;
    gap: 8px;
    margin-right: auto;
`

const ViewButton = styled.button`
    display: flex;
    align-items: center;
    justify-content: center;
    width: 72px;
    height: 44px;
    background: ${({ $active }) => ($active ? "#a6a6a6" : "none")};
`

const ZoomControls = styled.div`
    display: flex;
    align-items: center;
    gap: 14px;
    margin: 0 34px 0 16px;
`

const ZoomSlider = styled.input`
    appearance: none;
    width: 200px;
    height: 8px;
    margin: 0;
    border-radius: 4px;
    background: #999;

    &::-webkit-slider-thumb {
        appearance: none;
        width: 32px;
        height: 32px;
        border-radius: 50%;
        background: #fff;
        box-shadow: 0 1px 2px rgba(0, 0, 0, 0.4);
    }
`

const ZoomValue = styled.span`
    width: 72px;
    white-space: nowrap;
`
